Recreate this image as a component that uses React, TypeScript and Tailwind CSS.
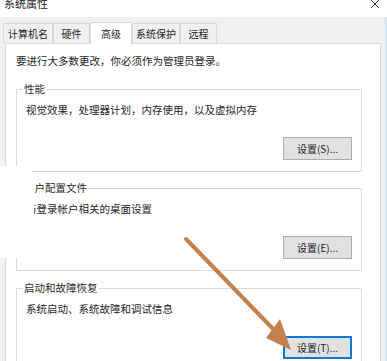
import React from "react";

const tabs = [
  { label: "计算机名", w: "w-[50px]" },
  { label: "硬件", w: "w-[37px]" },
  { label: "高级", w: "w-[42px]", active: true },
  { label: "系统保护", w: "w-[48px]" },
  { label: "远程", w: "w-[37px]" },
];

const groups = [
  { legend: "性能", text: "视觉效果，处理器计划，内存使用，以及虚拟内存", button: "设置(S)...", mt: "mt-[14px]" },
  { legend: "用户配置文件", text: "与登录帐户相关的桌面设置", button: "设置(E)...", mt: "mt-[9px]" },
  { legend: "启动和故障恢复", text: "系统启动、系统故障和调试信息", button: "设置(T)...", mt: "mt-[10px]", focus: true },
];

function Group({ g }: { g: (typeof groups)[number] }) {
  return (
    <fieldset className={`${g.mt} border border-[#dcdcdc] pl-[9px] pr-[9px] pb-[11px]`}>
      <legend className="-ml-[3px] px-[1px] text-[10.5px] leading-[14px] text-[#2a2a2a]">{g.legend}</legend>
      <div className="mt-[7px] text-[10.5px] leading-[14px] text-[#1e1e1e]">{g.text}</div>
      <div className="mt-[20px] flex justify-end">
        <button
          className={`h-[23px] w-[69px] text-[10px] text-[#1e1e1e] bg-[#e1e1e1] ${
            g.focus ? "border-2 border-[#0a78d7]" : "border border-[#adadad]"
          }`}
        >
          {g.button}
        </button>
      </div>
    </fieldset>
  );
}

export default function App() {
  return (
    <div
      className="relative w-[387px] h-[361px] overflow-hidden bg-[#f0f0f0]"
      style={{ fontFamily: '"Noto Sans CJK SC", "Noto Sans", sans-serif' }}
    >
      {/* Title bar */}
      <div className="relative h-[17px] bg-white">
        <div className="absolute left-[4px] -top-[4px] text-[11px] leading-[14px] text-[#222]">系统属性</div>
        <svg className="absolute left-[370px] -top-[1px]" width="10" height="10" viewBox="0 0 10 10">
          <path d="M1 1 L9 9 M9 1 L1 9" stroke="#333" strokeWidth="1" />
        </svg>
      </div>

      <div className="flex">
        <div className="flex-1">
          {/* Tabs */}
          <div className="flex items-end pl-[3px] pt-[5px]">
            {tabs.map((t) => (
              <div
                key={t.label}
                className={`${t.w} flex items-center justify-center border border-[#d9d9d9] border-b-0 text-[10px] text-[#1e1e1e] ${
                  t.active ? "relative z-10 -mb-px h-[22px] bg-white" : "h-[20px] bg-[#f0f0f0]"
                }`}
              >
                {t.label}
              </div>
            ))}
          </div>

          {/* Panel */}
          <div className="ml-[5px] h-[330px] border border-[#d9d9d9] bg-white pl-[10px] pr-[18px] pt-[10px]">
            <div className="text-[10.5px] leading-[14px] text-[#1e1e1e]">要进行大多数更改，你必须作为管理员登录。</div>
            {groups.map((g) => (
              <Group key={g.legend} g={g} />
            ))}
          </div>
        </div>
        <div className="w-[6px] flex justify-end">
          <div className="w-[2px] bg-[#d6e4f0]" />
        </div>
      </div>

      {/* White blob overlay on the left */}
      <div className="absolute left-0 top-[166px] h-[92px] w-[34px] rounded-r-[14px] bg-white" />

      {/* Arrow annotation */}
      <svg className="absolute left-0 top-0" width="387" height="361" viewBox="0 0 387 361">
        <line x1="186" y1="239" x2="278" y2="334" stroke="#c4804b" strokeWidth="4" strokeLinecap="round" />
        <polygon points="266,338 280,319 291,350" fill="#c4804b" />
      </svg>
    </div>
  );
}
